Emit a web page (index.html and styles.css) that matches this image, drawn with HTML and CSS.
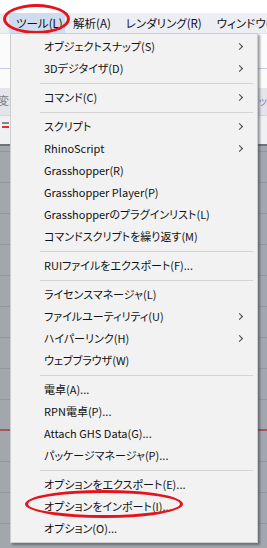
FILE: index.html
```html
<!DOCTYPE html>
<html lang="ja">
    <head>
        <meta charset="UTF-8">
        <title>ツール</title>
        <link rel="stylesheet" href="styles.css">
    </head>
    <body>
        <div class="screen">
            <div class="titlebar"></div>
            <ul class="menubar">
                <li class="active">ツール(L)</li>
                <li>解析(A)</li>
                <li>レンダリング(R)</li>
                <li>ウィンドウ(W)</li>
            </ul>
            <div class="toolbar"></div>
            <div class="tabs">
                <span class="tab-left">変:</span>
                <span class="tab-right">リッ</span>
            </div>
            <div class="iconbar"><span class="tool-icon"></span></div>
            <div class="viewport">
                <div class="axis-x"></div>
            </div>

            <div class="mark mark-menu"></div>

            <ul class="dropdown">
                <li class="sub">オブジェクトスナップ(S)</li>
                <li class="sub">3Dデジタイザ(D)</li>
                <li class="sep"></li>
                <li class="sub">コマンド(C)</li>
                <li class="sep"></li>
                <li class="sub">スクリプト</li>
                <li class="sub">RhinoScript</li>
                <li>Grasshopper(R)</li>
                <li>Grasshopper Player(P)</li>
                <li>Grasshopperのプラグインリスト(L)</li>
                <li>コマンドスクリプトを繰り返す(M)</li>
                <li class="sep"></li>
                <li>RUIファイルをエクスポート(F)...</li>
                <li class="sep"></li>
                <li>ライセンスマネージャ(L)</li>
                <li class="sub">ファイルユーティリティ(U)</li>
                <li class="sub">ハイパーリンク(H)</li>
                <li>ウェブブラウザ(W)</li>
                <li class="sep"></li>
                <li>電卓(A)...</li>
                <li>RPN電卓(P)...</li>
                <li>Attach GHS Data(G)...</li>
                <li>パッケージマネージャ(P)...</li>
                <li class="sep"></li>
                <li>オプションをエクスポート(E)...</li>
                <li>オプションをインポート(I)...</li>
                <li>オプション(O)...</li>
            </ul>

            <div class="mark mark-import"></div>
        </div>
    </body>
</html>
```

FILE: styles.css
```css
*{
    margin: 0;
    padding: 0;
    box-sizing: border-box;
}
ul{
    list-style: none;
}
html,body{
    width: 100%;
    height: 100%;
    overflow: hidden;
}
body{
    font-family: "Noto Sans CJK JP", "Noto Sans", sans-serif;
    font-size: 11px;
    font-feature-settings: "palt";
    color: #111;
}
.screen{
    position: relative;
    width: 267px;
    height: 548px;
    overflow: hidden;
    background-color: #a2a7ad;
}
.titlebar{
    height: 13px;
    background-color: #fff;
}
.menubar{
    display: flex;
    height: 20px;
    padding-left: 9px;
    background-color: #eceef4;
    white-space: nowrap;
    font-size: 11.5px;
}
.menubar li{
    height: 20px;
    line-height: 20px;
    padding: 0 7px;
    margin-right: 1px;
}
.menubar li.active{
    width: 56px;
    background-color: #cfdcef;
}
.toolbar{
    height: 55px;
    background-color: #fbfbfc;
    border-top: 1px solid #e3e5ea;
    padding-top: 34px;
}
.toolbar::after{
    content: "";
    display: block;
    height: 1px;
    background-color: #c4cbe0;
}
.tabs{
    display: flex;
    justify-content: space-between;
    height: 27px;
    padding-top: 4px;
    background-color: #e3e5ea;
    color: #7b7f88;
}
.tab-left{
    margin-left: -2px;
}
.tab-right{
    color: #8a7fc4;
}
.iconbar{
    height: 31px;
    padding: 6px 0 0 2px;
    background-color: #eef0f2;
    border-top: 1px solid #d2d5da;
    border-bottom: 2px solid #6e7379;
}
.tool-icon{
    display: block;
    width: 7px;
    height: 6px;
    border-top: 2px solid #888;
    border-bottom: 2px solid #d33;
}
.viewport{
    height: 401px;
    background-color: #a2a7ad;
    background-image: linear-gradient(#92979d 1px, transparent 1px);
    background-size: 100% 31px;
    background-position: 0 5px;
    padding-top: 283px;
}
.axis-x{
    height: 2px;
    background-color: #a4545a;
}
.dropdown{
    position: absolute;
    left: 10px;
    top: 33px;
    width: 248px;
    padding: 2px;
    background-color: #f2f2f2;
    border: 1px solid #cdcdcd;
    box-shadow: 2px 2px 2px rgba(40, 44, 50, 0.45);
    white-space: nowrap;
}
.dropdown li{
    position: relative;
    height: 22px;
    line-height: 21px;
    padding-left: 31px;
}
.dropdown li.sub::after{
    content: "";
    position: absolute;
    right: 13px;
    top: 8px;
    width: 4px;
    height: 4px;
    border-top: 1px solid #444;
    border-right: 1px solid #444;
    transform: rotate(45deg);
}
.dropdown li.sep{
    height: 7px;
    padding: 3px 0 0;
    margin: 0 2px 0 27px;
}
.dropdown li.sep::before{
    content: "";
    display: block;
    height: 1px;
    background-color: #d4d4d4;
}
.mark{
    position: absolute;
    border: 3px solid #e5141c;
    border-radius: 50%;
}
.mark-menu{
    left: 3px;
    top: 4px;
    width: 67px;
    height: 30px;
}
.mark-import{
    left: 25px;
    top: 490px;
    width: 158px;
    height: 28px;
}
```
